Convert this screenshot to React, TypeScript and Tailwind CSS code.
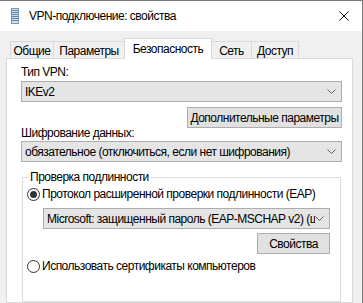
import React from "react";

const Chevron = () => (
  <svg width="9" height="5" viewBox="0 0 9 5" className="shrink-0">
    <path d="M0.5 0.5 L4.5 4.5 L8.5 0.5" fill="none" stroke="#606060" strokeWidth="1" />
  </svg>
);

const Select = ({ text, className = "" }: { text: string; className?: string }) => (
  <div
    className={
      "h-[21px] bg-[#e5e5e5] border border-[#adadad] flex items-center pl-[3px] pr-[5px] min-w-0 " + className
    }
  >
    <span className="flex-1 min-w-0 whitespace-nowrap overflow-hidden leading-[16px]">{text}</span>
    <Chevron />
  </div>
);

const Button = ({ text, className = "" }: { text: string; className?: string }) => (
  <div
    className={
      "h-[21px] bg-[#e1e1e1] border border-[#adadad] flex items-center justify-center leading-[16px] whitespace-nowrap " +
      className
    }
  >
    {text}
  </div>
);

const Radio = ({ checked }: { checked?: boolean }) => (
  <div className="w-[13px] h-[13px] rounded-full border border-[#333333] bg-white flex items-center justify-center shrink-0">
    {checked && <div className="w-[7px] h-[7px] rounded-full bg-[#333333]" />}
  </div>
);

const Tab = ({ text, w, selected }: { text: string; w: string; selected?: boolean }) =>
  selected ? (
    <div
      className={
        "h-[21px] bg-white border-l border-t border-r border-[#d9d9d9] -ml-px flex justify-center pt-[2px] leading-[16px] relative z-10 " +
        w
      }
    >
      {text}
    </div>
  ) : (
    <div
      className={
        "mt-[3px] h-[17px] bg-[#f0f0f0] border-l border-t border-r border-[#d9d9d9] -ml-px flex justify-center pt-[1px] leading-[16px] " +
        w
      }
    >
      {text}
    </div>
  );

export default function App() {
  return (
    <div
      className="w-[363px] h-[303px] overflow-hidden bg-[#f0f0f0] border-t border-r border-[#7a7a7a] flex flex-col text-[12px] tracking-[-0.5px] text-black"
      style={{ fontFamily: '"Liberation Sans", Arial, sans-serif' }}
    >
      <div className="h-[30px] bg-white flex items-center shrink-0">
        <svg width="8" height="16" viewBox="0 0 8 16" className="ml-[11px]">
          <rect x="0.5" y="0.5" width="7" height="15" fill="#cfe0ee" stroke="#7c98b4" />
          <rect x="1" y="2" width="6" height="1" fill="#5b86b0" />
          <rect x="1" y="4" width="6" height="1" fill="#5b86b0" />
          <rect x="1" y="6" width="6" height="1" fill="#5b86b0" />
          <rect x="1" y="8" width="6" height="1" fill="#5b86b0" />
          <rect x="1" y="10" width="6" height="1" fill="#5b86b0" />
          <rect x="1" y="12" width="6" height="1" fill="#5b86b0" />
        </svg>
        <span className="ml-[10px] leading-[16px] whitespace-nowrap">VPN-подключение: свойства</span>
        <svg width="10" height="10" viewBox="0 0 10 10" className="ml-auto mr-[13px]">
          <path d="M0.5 0.5 L9.5 9.5 M9.5 0.5 L0.5 9.5" stroke="#111" strokeWidth="1" fill="none" />
        </svg>
      </div>
      <div className="flex-1 flex flex-col pt-[7px] pl-[6px] pr-[9px]">
        <div className="flex items-start h-[21px] -mb-px pl-[5px]">
          <Tab text="Общие" w="w-[44px]" />
          <Tab text="Параметры" w="w-[72px]" />
          <Tab text="Безопасность" w="w-[88px]" selected />
          <Tab text="Сеть" w="w-[41px]" />
          <Tab text="Доступ" w="w-[48px]" />
        </div>
        <div className="flex-1 bg-white border border-[#d9d9d9] flex flex-col pl-[14px] pr-[10px] min-w-0">
          <div className="mt-[5px] leading-[16px]">Тип VPN:</div>
          <Select text="IKEv2" className="mt-[1px]" />
          <Button text="Дополнительные параметры" className="mt-[5px] self-end w-[155px]" />
          <div className="-mt-[3px] leading-[16px]">Шифрование данных:</div>
          <Select text="обязательное (отключиться, если нет шифрования)" />
          <fieldset className="mt-[7px] mx-[1px] border border-[#dcdcdc] pl-[4px] pr-[10px] flex-1 flex flex-col min-w-0">
            <legend className="ml-[1px] px-[2px] leading-[16px]">Проверка подлинности</legend>
            <div className="mt-[1px] h-[16px] flex items-center gap-[2px] leading-[16px] whitespace-nowrap">
              <Radio checked />
              <span>Протокол расширенной проверки подлинности (EAP)</span>
            </div>
            <Select
              text="Microsoft: защищенный пароль (EAP-MSCHAP v2) (шифрование включено)"
              className="mt-[6px] ml-[16px]"
            />
            <Button text="Свойства" className="mt-[4px] self-end w-[73px]" />
            <div className="mt-[4px] h-[16px] flex items-center gap-[2px] leading-[16px] whitespace-nowrap">
              <Radio />
              <span>Использовать сертификаты компьютеров</span>
            </div>
          </fieldset>
        </div>
      </div>
    </div>
  );
}
